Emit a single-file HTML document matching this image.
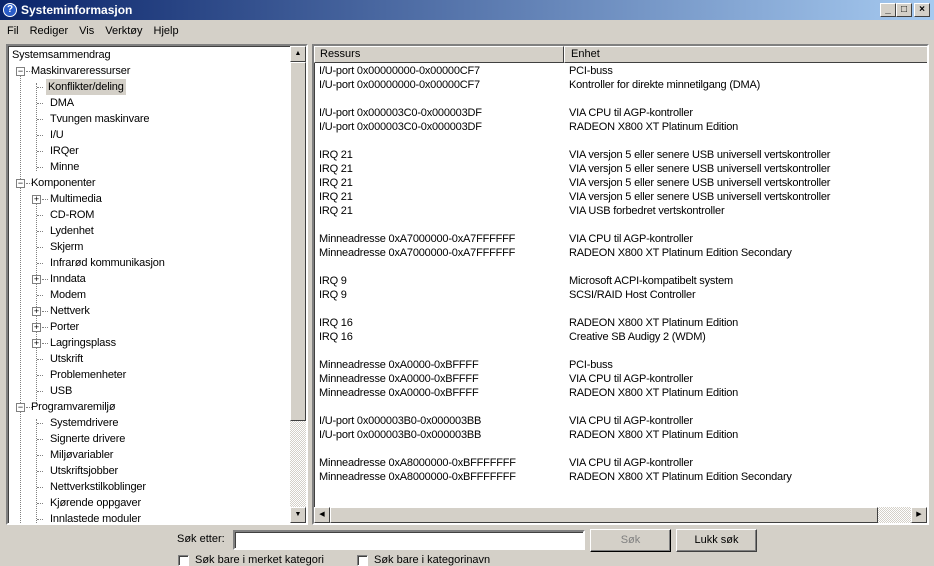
<!DOCTYPE html><html><head><meta charset="utf-8"><style>
*{box-sizing:border-box;margin:0;padding:0}
body{width:934px;height:560px;overflow:hidden;background:#d4d0c8;font-family:"Liberation Sans",sans-serif;font-size:11px;color:#000;position:relative}
.abs{position:absolute}
.title{left:0;top:0;width:934px;height:20px;background:linear-gradient(to right,#0a246a,#a6caf0);color:#fff;font-weight:bold;font-size:12px;line-height:20px;padding-left:21px}
.tb{top:3px;width:16px;height:14px;background:#d4d0c8;border:1px solid;border-color:#fff #404040 #404040 #fff;font-size:10px;color:#000;text-align:center;line-height:12px;font-weight:bold}
.menu span{margin-right:11px}
.sunken{border:2px solid;border-color:#808080 #fff #fff #808080;box-shadow:inset 1px 1px 0 #404040;background:#fff}
.t{position:absolute;white-space:nowrap;line-height:16px;letter-spacing:-0.15px}
.btn{background:#d4d0c8;border:1px solid;border-color:#fff #404040 #404040 #fff;text-align:center}
.hatch{background:repeating-conic-gradient(#d4d0c8 0 25%,#fff 0 50%) 0 0/2px 2px}
.r{position:absolute;white-space:nowrap;line-height:14px;letter-spacing:-0.2px}
.dot{position:absolute;border-left:1px dotted #808080}
.hd{position:absolute;border-top:1px dotted #808080;width:6px}
.pm{position:absolute;width:9px;height:9px;border:1px solid #808080;background:#fff;font-size:9px;line-height:7px;text-align:center}
</style></head><body>
<div class="abs title">Systeminformasjon</div>
<div class="abs" style="left:3px;top:3px;width:14px;height:14px;border-radius:50%;background:#2a5cc8;border:1px solid #fff;color:#fff;font-size:10px;font-weight:bold;text-align:center;line-height:12px">?</div>
<div class="abs tb" style="left:880px">_</div>
<div class="abs tb" style="left:896px">□</div>
<div class="abs tb" style="left:914px">×</div>
<div class="abs menu" style="left:7px;top:24px;line-height:14px"><span>Fil</span><span>Rediger</span><span>Vis</span><span>Verktøy</span><span>Hjelp</span></div>

<div class="abs sunken" style="left:6px;top:44px;width:302px;height:481px;overflow:hidden">
<div class="dot" style="left:12px;top:21px;height:460px"></div>
<div class="dot" style="left:28px;top:37px;height:88px"></div>
<div class="dot" style="left:28px;top:149px;height:208px"></div>
<div class="dot" style="left:28px;top:373px;height:110px"></div>
<div class="t" style="left:4px;top:1px">Systemsammendrag</div>
<div class="pm" style="left:8px;top:21px">−</div><div class="hd" style="left:18px;top:25px"></div><div class="t" style="left:23px;top:17px">Maskinvareressurser</div>
<div class="hd" style="left:29px;top:41px"></div><div class="t" style="left:40px;top:33px;background:#d4d0c8;padding:0 2px;margin-left:-2px">Konflikter/deling</div>
<div class="hd" style="left:29px;top:57px"></div><div class="t" style="left:42px;top:49px">DMA</div>
<div class="hd" style="left:29px;top:73px"></div><div class="t" style="left:42px;top:65px">Tvungen maskinvare</div>
<div class="hd" style="left:29px;top:89px"></div><div class="t" style="left:42px;top:81px">I/U</div>
<div class="hd" style="left:29px;top:105px"></div><div class="t" style="left:42px;top:97px">IRQer</div>
<div class="hd" style="left:29px;top:121px"></div><div class="t" style="left:42px;top:113px">Minne</div>
<div class="pm" style="left:8px;top:133px">−</div><div class="hd" style="left:18px;top:137px"></div><div class="t" style="left:23px;top:129px">Komponenter</div>
<div class="pm" style="left:24px;top:149px">+</div><div class="hd" style="left:34px;top:153px"></div><div class="t" style="left:42px;top:145px">Multimedia</div>
<div class="hd" style="left:29px;top:169px"></div><div class="t" style="left:42px;top:161px">CD-ROM</div>
<div class="hd" style="left:29px;top:185px"></div><div class="t" style="left:42px;top:177px">Lydenhet</div>
<div class="hd" style="left:29px;top:201px"></div><div class="t" style="left:42px;top:193px">Skjerm</div>
<div class="hd" style="left:29px;top:217px"></div><div class="t" style="left:42px;top:209px">Infrarød kommunikasjon</div>
<div class="pm" style="left:24px;top:229px">+</div><div class="hd" style="left:34px;top:233px"></div><div class="t" style="left:42px;top:225px">Inndata</div>
<div class="hd" style="left:29px;top:249px"></div><div class="t" style="left:42px;top:241px">Modem</div>
<div class="pm" style="left:24px;top:261px">+</div><div class="hd" style="left:34px;top:265px"></div><div class="t" style="left:42px;top:257px">Nettverk</div>
<div class="pm" style="left:24px;top:277px">+</div><div class="hd" style="left:34px;top:281px"></div><div class="t" style="left:42px;top:273px">Porter</div>
<div class="pm" style="left:24px;top:293px">+</div><div class="hd" style="left:34px;top:297px"></div><div class="t" style="left:42px;top:289px">Lagringsplass</div>
<div class="hd" style="left:29px;top:313px"></div><div class="t" style="left:42px;top:305px">Utskrift</div>
<div class="hd" style="left:29px;top:329px"></div><div class="t" style="left:42px;top:321px">Problemenheter</div>
<div class="hd" style="left:29px;top:345px"></div><div class="t" style="left:42px;top:337px">USB</div>
<div class="pm" style="left:8px;top:357px">−</div><div class="hd" style="left:18px;top:361px"></div><div class="t" style="left:23px;top:353px">Programvaremiljø</div>
<div class="hd" style="left:29px;top:377px"></div><div class="t" style="left:42px;top:369px">Systemdrivere</div>
<div class="hd" style="left:29px;top:393px"></div><div class="t" style="left:42px;top:385px">Signerte drivere</div>
<div class="hd" style="left:29px;top:409px"></div><div class="t" style="left:42px;top:401px">Miljøvariabler</div>
<div class="hd" style="left:29px;top:425px"></div><div class="t" style="left:42px;top:417px">Utskriftsjobber</div>
<div class="hd" style="left:29px;top:441px"></div><div class="t" style="left:42px;top:433px">Nettverkstilkoblinger</div>
<div class="hd" style="left:29px;top:457px"></div><div class="t" style="left:42px;top:449px">Kjørende oppgaver</div>
<div class="hd" style="left:29px;top:473px"></div><div class="t" style="left:42px;top:465px">Innlastede moduler</div>
<div class="abs hatch" style="left:282px;top:0;width:16px;height:477px"></div>
<div class="abs btn" style="left:282px;top:0;width:16px;height:16px;font-size:7px;line-height:14px">▲</div>
<div class="abs btn" style="left:282px;top:16px;width:16px;height:359px"></div>
<div class="abs btn" style="left:282px;top:461px;width:16px;height:16px;font-size:7px;line-height:14px">▼</div>
</div>

<div class="abs sunken" style="left:312px;top:44px;width:617px;height:481px;overflow:hidden">
<div class="abs btn" style="left:0;top:0;width:250px;height:17px;padding-left:5px;line-height:15px;text-align:left">Ressurs</div>
<div class="abs btn" style="left:250px;top:0;width:370px;height:17px;padding-left:6px;line-height:15px;text-align:left">Enhet</div>
<div id="rows"></div>
<div class="abs hatch" style="left:0;top:461px;width:613px;height:16px"></div>
<div class="abs btn" style="left:0;top:461px;width:16px;height:16px;font-size:7px;line-height:14px">◀</div>
<div class="abs btn" style="left:16px;top:461px;width:548px;height:16px"></div>
<div class="abs btn" style="left:597px;top:461px;width:16px;height:16px;font-size:7px;line-height:14px">▶</div>
</div>

<div class="abs" style="left:177px;top:532px;line-height:14px">Søk etter:</div>
<div class="abs sunken" style="left:233px;top:530px;width:352px;height:20px"></div>
<div class="abs btn" style="left:590px;top:529px;width:81px;height:23px;line-height:21px;color:#808080;border-color:#fff #000 #000 #fff;box-shadow:inset -1px -1px 0 #808080">Søk</div>
<div class="abs btn" style="left:676px;top:529px;width:81px;height:23px;line-height:21px;box-shadow:inset -1px -1px 0 #808080">Lukk søk</div>
<div class="abs sunken" style="left:178px;top:555px;width:11px;height:11px;border-width:1px"></div>
<div class="abs" style="left:195px;top:554px">Søk bare i merket kategori</div>
<div class="abs sunken" style="left:357px;top:555px;width:11px;height:11px;border-width:1px"></div>
<div class="abs" style="left:374px;top:554px">Søk bare i kategorinavn</div>
<script>
var d=[["I/U-port 0x00000000-0x00000CF7","PCI-buss"],["I/U-port 0x00000000-0x00000CF7","Kontroller for direkte minnetilgang (DMA)"],0,
["I/U-port 0x000003C0-0x000003DF","VIA CPU til AGP-kontroller"],["I/U-port 0x000003C0-0x000003DF","RADEON X800 XT Platinum Edition"],0,
["IRQ 21","VIA versjon 5 eller senere USB universell vertskontroller"],["IRQ 21","VIA versjon 5 eller senere USB universell vertskontroller"],["IRQ 21","VIA versjon 5 eller senere USB universell vertskontroller"],["IRQ 21","VIA versjon 5 eller senere USB universell vertskontroller"],["IRQ 21","VIA USB forbedret vertskontroller"],0,
["Minneadresse 0xA7000000-0xA7FFFFFF","VIA CPU til AGP-kontroller"],["Minneadresse 0xA7000000-0xA7FFFFFF","RADEON X800 XT Platinum Edition Secondary"],0,
["IRQ 9","Microsoft ACPI-kompatibelt system"],["IRQ 9","SCSI/RAID Host Controller"],0,
["IRQ 16","RADEON X800 XT Platinum Edition"],["IRQ 16","Creative SB Audigy 2 (WDM)"],0,
["Minneadresse 0xA0000-0xBFFFF","PCI-buss"],["Minneadresse 0xA0000-0xBFFFF","VIA CPU til AGP-kontroller"],["Minneadresse 0xA0000-0xBFFFF","RADEON X800 XT Platinum Edition"],0,
["I/U-port 0x000003B0-0x000003BB","VIA CPU til AGP-kontroller"],["I/U-port 0x000003B0-0x000003BB","RADEON X800 XT Platinum Edition"],0,
["Minneadresse 0xA8000000-0xBFFFFFFF","VIA CPU til AGP-kontroller"],["Minneadresse 0xA8000000-0xBFFFFFFF","RADEON X800 XT Platinum Edition Secondary"]];
var h="";d.forEach(function(r,i){if(r){var y=18+i*14;h+='<div class="r" style="left:5px;top:'+y+'px">'+r[0]+'</div><div class="r" style="left:255px;top:'+y+'px">'+r[1]+'</div>';}});
document.getElementById("rows").innerHTML=h;
</script>
</body></html>
